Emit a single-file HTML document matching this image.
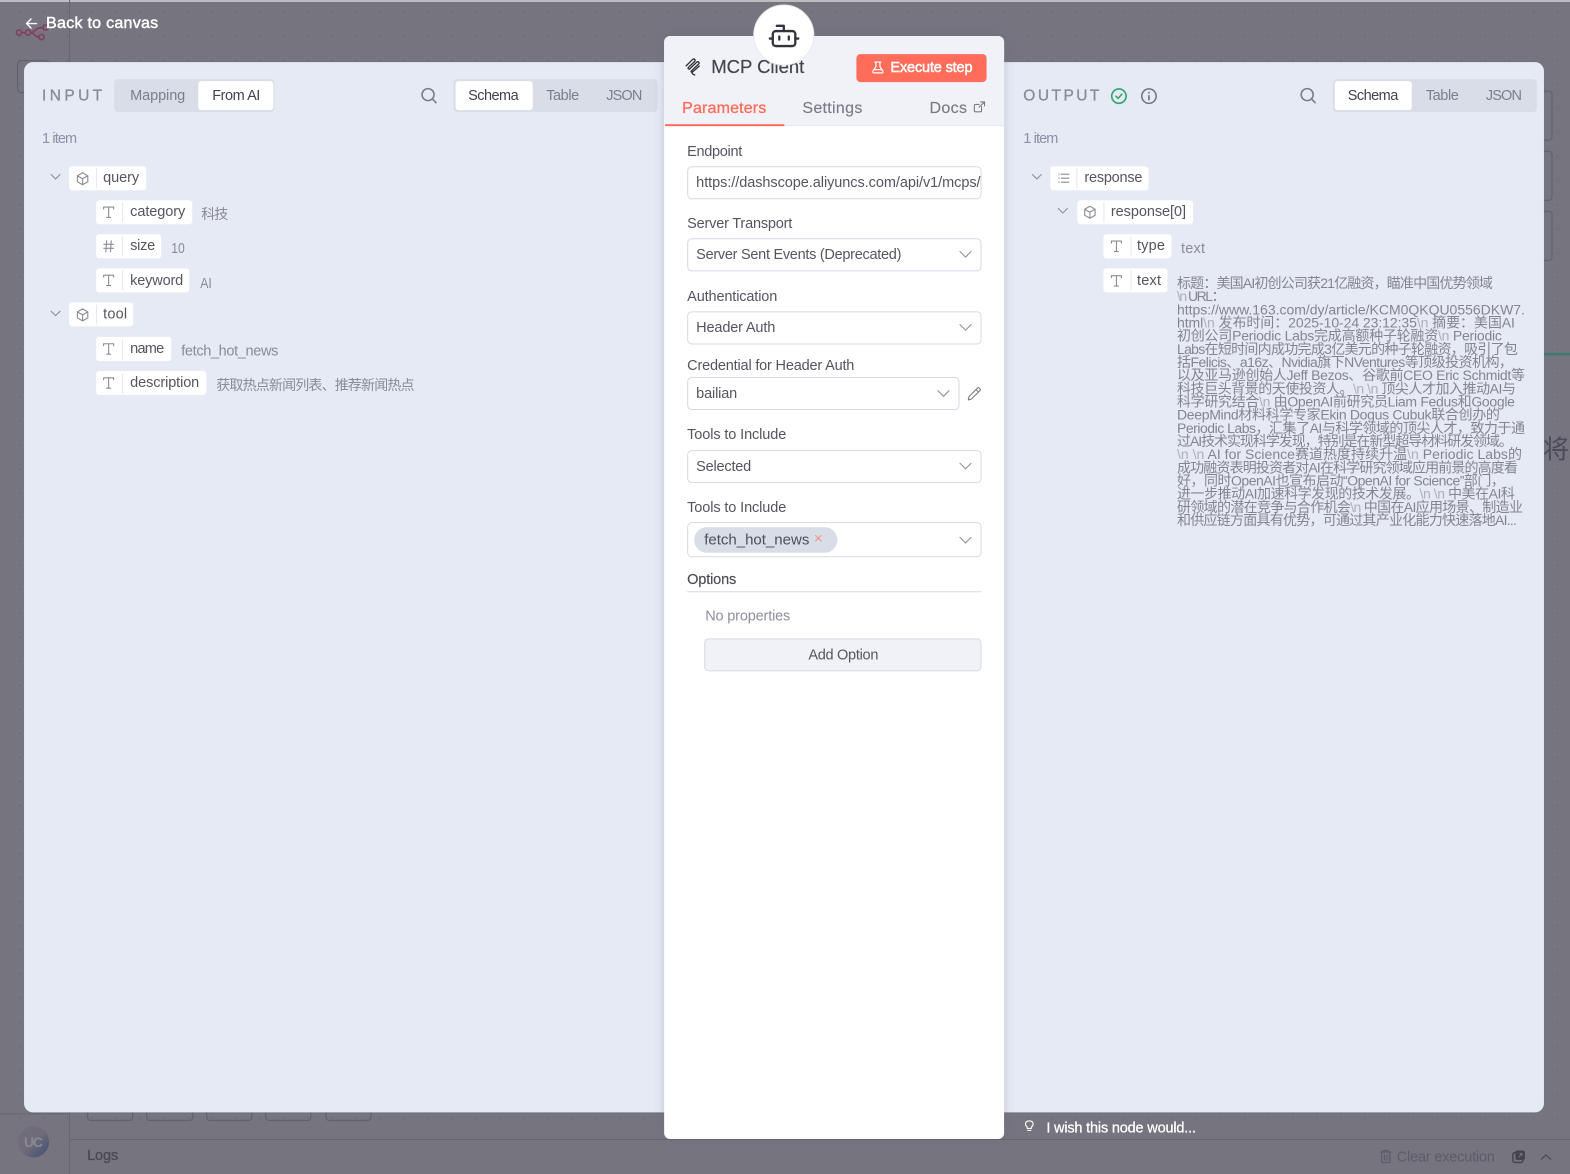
<!DOCTYPE html>
<html lang="en"><head><meta charset="utf-8"><title>MCP Client</title>
<style>
html,body{margin:0;padding:0;background:#76747f;overflow:hidden}
svg{display:block}
text{font-family:"Liberation Sans","Noto Sans CJK SC",sans-serif;font-size:14.5px;fill:currentColor;white-space:pre}
.m{stroke:currentColor;stroke-width:.3px}
.lab{color:#555560}
.val{color:#555560}
.dk{color:#42424e}
.g{color:#7d7e8b}
.v{color:#8a8b97;font-size:14.5px}
.b{color:#84858f;font-size:14px}
.b tspan{fill:#aeb0bd}
.ic{fill:none;stroke:#8b8c98;stroke-width:1.1;stroke-linecap:round;stroke-linejoin:round}
.ch{fill:none;stroke:#8f919e;stroke-width:1.1;stroke-linecap:round;stroke-linejoin:round}
.se{fill:none;stroke:#7d7e8b;stroke-width:1.6;stroke-linecap:round}
.box{fill:#fff;stroke:#d6dae6;stroke-width:1}
.pill{fill:#fff}
.div{stroke:#e4e7f0;stroke-width:1}
.bg{fill:none;stroke:#5f5d68;stroke-width:1}
</style></head><body>
<svg xmlns="http://www.w3.org/2000/svg" width="1570" height="1174" viewBox="0 0 1568 1172.5">
<defs>
<pattern id="dots" x="91" y="12" width="24" height="24" patternUnits="userSpaceOnUse"><circle cx="0.5" cy="0.5" r="0.7" fill="#605e69"/></pattern>
<filter id="sh" x="-10%" y="-5%" width="120%" height="110%"><feDropShadow dx="0" dy="0" stdDeviation="5" flood-color="#5a6080" flood-opacity=".28"/></filter>
<g id="chev"><path class="ch" d="M-4.5 -2.2 L0 2.2 L4.5 -2.2"/></g>
<g id="chevs"><path class="ch" d="M-5.5 -2.8 L0 2.8 L5.5 -2.8"/></g>
<g id="cube"><path class="ic" d="M0 -6 L5.2 -3 V3 L0 6 L-5.2 3 V-3 Z M-5.2 -3 L0 0 L5.2 -3 M0 0 V6"/></g>
<g id="tt"><path class="ic" d="M-5 -3.2 V-5.2 H5 V-3.2 M0 -5.2 V5.2 M-2 5.2 H2"/></g>
<g id="hash"><path class="ic" d="M-2 -5.5 L-2.8 5.5 M2.6 -5.5 L1.8 5.5 M-4.8 -2 H4.8 M-4.8 2 H4.8"/></g>
<g id="list"><path class="ic" d="M-2.5 -4 H5 M-2.5 0 H5 M-2.5 4 H5 M-5 -4 H-4.7 M-5 0 H-4.7 M-5 4 H-4.7"/></g>
<g id="search"><circle class="se" cx="-1.500" cy="-1.500" r="6"/><path class="se" d="M3 3 L6.500 6.500"/></g>
<linearGradient id="av" x1="0" y1="0" x2="1" y2="1"><stop offset="0" stop-color="#6f6f7c"/><stop offset=".5" stop-color="#716a78"/><stop offset=".8" stop-color="#4e5a78"/><stop offset="1" stop-color="#5a5f7c"/></linearGradient>
</defs>

<!-- canvas background -->
<rect width="1570" height="1174" fill="#76747f"/>
<rect width="1570" height="1138" fill="url(#dots)"/>
<rect width="1570" height="2" fill="#bdbdc0"/>
<path d="M69.5 0 V1174 M69 1138 H1570 M0 1112.500 H69" stroke="#67656f" fill="none"/>
<rect x="17.5" y="60.5" width="32" height="32" rx="4" class="bg"/>
<g fill="none" stroke="#80405e" stroke-width="1.6">
<circle cx="19" cy="32.5" r="2.6"/><circle cx="28" cy="32.5" r="2.6"/><circle cx="41.5" cy="37" r="2.6"/><circle cx="45.5" cy="27.5" r="2.6"/>
<path d="M21.6 32.5 H25.4 M30.6 32.5 C35 32.5 34 37 38.9 37 M30.6 32.5 C35 32.5 35 27.5 42.9 27.5"/></g>
<g class="bg"><rect x="1528" y="91" width="22" height="49" rx="3"/><rect x="1528" y="151" width="22" height="49" rx="3"/><rect x="1528" y="211" width="22" height="49" rx="3"/>
<rect x="87.5" y="1090" width="45" height="29" rx="3"/><rect x="146.5" y="1090" width="46" height="29" rx="3"/><rect x="206.5" y="1090" width="45" height="29" rx="3"/><rect x="265.5" y="1090" width="45" height="29" rx="3"/><rect x="325.5" y="1090" width="45" height="29" rx="3"/></g>
<rect x="1540" y="352.5" width="30" height="2.5" fill="#3f7a6f"/>
<text x="1541" y="458" style="font-size:26px;color:#4c4b56">将[</text>

<!-- avatar -->
<circle cx="33.5" cy="1140.500" r="15.5" fill="url(#av)"/>
<text x="24" y="1145.500" textLength="19" lengthAdjust="spacing" style="font-size:14px;font-weight:700;color:#8a8893">UC</text>
<text x="87" y="1158.500" textLength="31" lengthAdjust="spacing" class="m" style="font-size:14.5px;color:#4a4853">Logs</text>
<g fill="none" stroke="#5d5b66" stroke-width="1.2" stroke-linecap="round"><path d="M1379 1150.5 H1389 M1382 1150.5 V1149 H1386 V1150.5 M1380 1151 V1161 H1388 V1151 M1382.8 1153.5 V1158.5 M1385.2 1153.5 V1158.5"/></g>
<text x="1395" y="1160" textLength="98" lengthAdjust="spacing" style="font-size:14.5px;color:#5d5b66">Clear execution</text>
<rect x="1511" y="1151" width="10" height="10" rx="2" fill="none" stroke="#45434d" stroke-width="1.5"/><rect x="1513.5" y="1149" width="9.5" height="9.5" rx="2" fill="#45434d"/><path d="M1516.5 1156 L1520 1152 M1517.5 1152 H1520 V1154.5" stroke="#76747f" fill="none"/>
<path d="M1539 1158 L1544 1153.5 L1549 1158" fill="none" stroke="#4e4c57" stroke-width="1.3"/>

<!-- back link -->
<path d="M36.5 23.5 H26.5 M31 19 L26.5 23.5 L31 28" fill="none" stroke="#fff" stroke-width="1.4" stroke-linecap="round" stroke-linejoin="round"/>
<text x="46" y="28" textLength="112" lengthAdjust="spacing" class="m" style="font-size:16px;color:#fff;stroke-width:.45px">Back to canvas</text>

<!-- main panel -->
<rect x="24" y="62" width="1518" height="1049" rx="9" fill="#e6eaf4"/>

<!-- INPUT -->
<text x="42" y="100.5" textLength="60" lengthAdjust="spacing" class="m" style="font-size:15.5px;color:#8a8b97">INPUT</text>
<rect x="114" y="79" width="160" height="33" rx="4" fill="#d9dde8"/>
<rect x="198" y="81" width="75" height="29" rx="3" fill="#fff"/>
<text x="130" y="100" textLength="55" lengthAdjust="spacing" class="g">Mapping</text>
<text x="212" y="100" textLength="48" lengthAdjust="spacing" class="dk">From AI</text>
<use href="#search" x="429" y="96"/>
<rect x="453" y="79" width="204" height="33" rx="4" fill="#d9dde8"/>
<rect x="455" y="81" width="77" height="29" rx="3" fill="#fff"/>
<text x="467.500" y="100" textLength="50.5" lengthAdjust="spacing" class="dk">Schema</text>
<text x="545.500" y="100" textLength="33" lengthAdjust="spacing" class="g">Table</text>
<text x="605.500" y="100" textLength="36" lengthAdjust="spacing" class="g">JSON</text>
<text x="42" y="143" textLength="35" lengthAdjust="spacing" style="color:#8a90a8;font-size:14.5px">1 item</text>

<use href="#chev" x="55.5" y="176.5"/>
<rect class="pill" x="69" y="166" width="77" height="24" rx="3"/><path class="div" d="M96.5 168 V188"/>
<use href="#cube" x="82.5" y="178.5"/>
<text x="103" y="182" textLength="36" lengthAdjust="spacing" class="val">query</text>

<rect class="pill" x="96" y="200" width="96" height="24" rx="3"/><path class="div" d="M122.5 202 V222"/>
<use href="#tt" x="108.5" y="212"/>
<text x="130" y="215.700" textLength="55" lengthAdjust="spacing" class="val">category</text>
<text x="201" y="218.7" textLength="27" lengthAdjust="spacing" class="v" style="font-size:14px">科技</text>

<rect class="pill" x="96" y="234" width="65" height="24" rx="3"/><path class="div" d="M122.5 236 V256"/>
<use href="#hash" x="108.5" y="246"/>
<text x="130" y="249.700" textLength="25" lengthAdjust="spacing" class="val">size</text>
<text x="171" y="252.7" textLength="13.5" lengthAdjust="spacingAndGlyphs" class="v">10</text>

<rect class="pill" x="96" y="268" width="93" height="24" rx="3"/><path class="div" d="M122.5 270 V290"/>
<use href="#tt" x="108.5" y="280"/>
<text x="130" y="284.700" textLength="53" lengthAdjust="spacing" class="val">keyword</text>
<text x="200" y="287.7" textLength="11.5" lengthAdjust="spacingAndGlyphs" class="v">AI</text>

<use href="#chev" x="55.5" y="313"/>
<rect class="pill" x="69" y="302" width="64" height="24" rx="3"/><path class="div" d="M96.5 304 V324"/>
<use href="#cube" x="82.5" y="314.5"/>
<text x="103" y="318" textLength="24" lengthAdjust="spacing" class="val">tool</text>

<rect class="pill" x="96" y="336.500" width="75" height="24" rx="3"/><path class="div" d="M122.5 339 V359"/>
<use href="#tt" x="108.5" y="348.500"/>
<text x="130" y="352.500" textLength="34" lengthAdjust="spacing" class="val">name</text>
<text x="181" y="355" textLength="97" lengthAdjust="spacing" class="v">fetch_hot_news</text>

<rect class="pill" x="96" y="370.500" width="110" height="24" rx="3"/><path class="div" d="M122.5 373 V393"/>
<use href="#tt" x="108.5" y="382.500"/>
<text x="130" y="386.500" textLength="69" lengthAdjust="spacing" class="val">description</text>
<text x="216" y="389.500" textLength="198" lengthAdjust="spacing" class="v" style="font-size:14px">获取热点新闻列表、推荐新闻热点</text>

<!-- OUTPUT -->
<text x="1022" y="100.5" textLength="76" lengthAdjust="spacing" class="m" style="font-size:15.5px;color:#8a8b97">OUTPUT</text>
<circle cx="1117.5" cy="96" r="7.2" fill="none" stroke="#2aa568" stroke-width="1.6"/><path d="M1114.5 96 L1116.7 98.2 L1120.5 94" fill="none" stroke="#2aa568" stroke-width="1.5" stroke-linecap="round" stroke-linejoin="round"/>
<circle cx="1147.5" cy="96" r="7.2" fill="none" stroke="#70717d" stroke-width="1.5"/><path d="M1147.5 95.5 V99.5 M1147.5 92.3 V92.8" fill="none" stroke="#70717d" stroke-width="1.6" stroke-linecap="round"/>
<use href="#search" x="1307" y="96"/>
<rect x="1331" y="79" width="204" height="33" rx="4" fill="#d9dde8"/>
<rect x="1333" y="81" width="77" height="29" rx="3" fill="#fff"/>
<text x="1346" y="100" textLength="50.5" lengthAdjust="spacing" class="dk">Schema</text>
<text x="1424" y="100" textLength="33" lengthAdjust="spacing" class="g">Table</text>
<text x="1484" y="100" textLength="36" lengthAdjust="spacing" class="g">JSON</text>
<text x="1022" y="143" textLength="35" lengthAdjust="spacing" style="color:#8a90a8;font-size:14.5px">1 item</text>

<use href="#chev" x="1035.5" y="176.5"/>
<rect class="pill" x="1049" y="166" width="98" height="24" rx="3"/><path class="div" d="M1075.500 168 V188"/>
<use href="#list" x="1062.500" y="178"/>
<text x="1083" y="182" textLength="58" lengthAdjust="spacing" class="val">response</text>

<use href="#chev" x="1061.500" y="210.5"/>
<rect class="pill" x="1076" y="200" width="115.500" height="24" rx="3"/><path class="div" d="M1102.500 202 V222"/>
<use href="#cube" x="1088.500" y="212"/>
<text x="1109.500" y="215.700" textLength="75" lengthAdjust="spacing" class="val">response[0]</text>

<rect class="pill" x="1102" y="234" width="68" height="24" rx="3"/><path class="div" d="M1129.500 236 V256"/>
<use href="#tt" x="1115" y="246"/>
<text x="1135.500" y="249.700" textLength="28" lengthAdjust="spacing" class="val">type</text>
<text x="1179.500" y="252.700" textLength="24" lengthAdjust="spacing" class="v">text</text>

<rect class="pill" x="1102" y="268" width="64" height="24" rx="3"/><path class="div" d="M1129.500 270 V290"/>
<use href="#tt" x="1115" y="280.500"/>
<text x="1135.500" y="284.700" textLength="24" lengthAdjust="spacing" class="val">text</text>

<g class="b">
<text class="b" x="1175.500" y="287.7" textLength="315.5" lengthAdjust="spacing">标题：美国AI初创公司获21亿融资，瞄准中国优势领域</text>
<text class="b" x="1175.500" y="300.85" textLength="48.5" lengthAdjust="spacing"><tspan>\n</tspan> URL：</text>
<text class="b" x="1175.500" y="314" textLength="347.5" lengthAdjust="spacing">https://www.163.com/dy/article/KCM0QKQU0556DKW7.</text>
<text class="b" x="1175.500" y="327.15" textLength="337.5" lengthAdjust="spacing">html<tspan>\n</tspan> 发布时间：2025-10-24 23:12:35<tspan>\n</tspan> 摘要：美国AI</text>
<text class="b" x="1175.500" y="340.3" textLength="324.5" lengthAdjust="spacing">初创公司Periodic Labs完成高额种子轮融资<tspan>\n</tspan> Periodic</text>
<text class="b" x="1175.500" y="353.45" textLength="340.5" lengthAdjust="spacing">Labs在短时间内成功完成3亿美元的种子轮融资，吸引了包</text>
<text class="b" x="1175.500" y="366.6" textLength="335.5" lengthAdjust="spacing">括Felicis、a16z、Nvidia旗下NVentures等顶级投资机构，</text>
<text class="b" x="1175.500" y="379.75" textLength="347.5" lengthAdjust="spacing">以及亚马逊创始人Jeff Bezos、谷歌前CEO Eric Schmidt等</text>
<text class="b" x="1175.500" y="392.9" textLength="338.5" lengthAdjust="spacing">科技巨头背景的天使投资人。<tspan>\n \n</tspan> 顶尖人才加入推动AI与</text>
<text class="b" x="1175.500" y="406.05" textLength="337.5" lengthAdjust="spacing">科学研究结合<tspan>\n</tspan> 由OpenAI前研究员Liam Fedus和Google</text>
<text class="b" x="1175.500" y="419.2" textLength="322.5" lengthAdjust="spacing">DeepMind材料科学专家Ekin Dogus Cubuk联合创办的</text>
<text class="b" x="1175.500" y="432.35" textLength="347.5" lengthAdjust="spacing">Periodic Labs，汇集了AI与科学领域的顶尖人才，致力于通</text>
<text class="b" x="1175.500" y="445.5" textLength="335.5" lengthAdjust="spacing">过AI技术实现科学发现，特别是在新型超导材料研发领域。</text>
<text class="b" x="1175.500" y="458.65" textLength="344.5" lengthAdjust="spacing"><tspan>\n \n</tspan> AI for Science赛道热度持续升温<tspan>\n</tspan> Periodic Labs的</text>
<text class="b" x="1175.500" y="471.8" textLength="340.5" lengthAdjust="spacing">成功融资表明投资者对AI在科学研究领域应用前景的高度看</text>
<text class="b" x="1175.500" y="484.95" textLength="327.5" lengthAdjust="spacing">好，同时OpenAI也宣布启动“OpenAI for Science”部门，</text>
<text class="b" x="1175.500" y="498.1" textLength="337.5" lengthAdjust="spacing">进一步推动AI加速科学发现的技术发展。<tspan>\n \n</tspan> 中美在AI科</text>
<text class="b" x="1175.500" y="511.25" textLength="345.5" lengthAdjust="spacing">研领域的潜在竞争与合作机会<tspan>\n</tspan> 中国在AI应用场景、制造业</text>
<text class="b" x="1175.500" y="524.4" textLength="339.5" lengthAdjust="spacing">和供应链方面具有优势，可通过其产业化能力快速落地AI...</text>
</g>

<!-- wish -->
<path d="M1025.5 1125 C1023.5 1123.5 1023.5 1119.5 1028 1119.5 C1032.5 1119.5 1032.5 1123.5 1030.5 1125 L1030 1127 H1026 Z M1026.5 1129 H1029.5" fill="none" stroke="#fff" stroke-width="1.1" stroke-linecap="round" stroke-linejoin="round"/>
<text x="1045" y="1131" textLength="149.500" lengthAdjust="spacing" class="m" style="font-size:14.5px;color:#fff;stroke-width:.25px">I wish this node would...</text>

<!-- center panel -->
<g transform="translate(-0.7,0)">
<g filter="url(#sh)"><rect x="664" y="36" width="339.5" height="1101.500" rx="6" fill="#fff"/></g>
<path d="M664 125 V42 A6 6 0 0 1 670 36 H997.5 A6 6 0 0 1 1003.5 42 V125 Z" fill="#f0f2f8"/>
<path d="M664 125.5 H1003.5" stroke="#e3e6ef"/>

<path d="M686 65.8 L692.3 59.5 Q693.6 58.4 694.6 59.4 Q695.4 60.4 694.4 61.4 L688 67.6 Q687.6 69 689.2 69 L696.6 62 Q697.8 61.2 698.6 62 Q699.3 63 698.4 64 L691 71 Q690.6 72.2 692.2 72 L699 66 M691.6 71.6 Q692 74.5 694.6 74.8" fill="none" stroke="#33333d" stroke-width="1.35" stroke-linecap="round" stroke-linejoin="round"/>
<text x="711" y="73" textLength="93" lengthAdjust="spacing" class="m" style="font-size:18.5px;color:#44444f;stroke-width:.2px">MCP Client</text>
<rect x="856" y="54" width="130" height="28" rx="4" fill="#ff6d5a"/>
<path d="M874.5 62 H880.5 M875.5 62 V66.5 L872.5 71 C872 72.2 872.6 72.8 873.5 72.8 H881.5 C882.4 72.8 883 72.2 882.5 71 L879.5 66.5 V62 M873.8 69.5 H881.2" fill="none" stroke="#fff" stroke-width="1.2" stroke-linecap="round" stroke-linejoin="round"/>
<text x="890" y="72" textLength="82" lengthAdjust="spacing" class="m" style="font-size:14.5px;color:#fff;stroke-width:.5px">Execute step</text>

<circle cx="783.500" cy="35" r="30" fill="#fff" stroke="#e6e9f2"/>
<g transform="translate(-1,0)" fill="none" stroke="#33333d" stroke-width="2.3" stroke-linecap="round" stroke-linejoin="round">
<rect x="773.5" y="31" width="22.5" height="15" rx="3"/>
<path d="M784.5 31 V25.8 H777.5 M770.5 38.5 H773.5 M796 38.5 H799 M780 36.5 V39.5 M789.5 36.5 V39.5"/>
</g>

<text x="682" y="113" textLength="84" lengthAdjust="spacing" class="m" style="font-size:16px;color:#ff6d5a">Parameters</text>
<rect x="665" y="124" width="119" height="2" fill="#ff6d5a"/>
<text x="802" y="113" textLength="60" lengthAdjust="spacing" class="m" style="font-size:16px;color:#7a7b86;stroke-width:.15px">Settings</text>
<text x="929" y="113" textLength="37.5" lengthAdjust="spacing" class="m" style="font-size:16px;color:#7a7b86;stroke-width:.15px">Docs</text>
<path d="M981 106.5 V110.5 C981 111.2 980.5 111.7 979.8 111.7 H975 C974.3 111.7 973.8 111.2 973.8 110.5 V105.5 C973.8 104.8 974.3 104.3 975 104.3 H978.5 M980 101.8 H984 V105.8 M984 101.8 L978.5 107" fill="none" stroke="#7a7b86" stroke-width="1.1" stroke-linecap="round" stroke-linejoin="round"/>

<text x="687" y="155.700" textLength="55" lengthAdjust="spacing" class="lab">Endpoint</text>
<rect class="box" x="687.5" y="166.5" width="293" height="32" rx="4"/>
<text x="696" y="187" textLength="284" lengthAdjust="spacing" class="val">https://dashscope.aliyuncs.com/api/v1/mcps/</text>

<text x="687" y="227.600" textLength="105" lengthAdjust="spacing" class="lab">Server Transport</text>
<rect class="box" x="687.5" y="238.5" width="293" height="32" rx="4"/>
<text x="696" y="258.700" textLength="205" lengthAdjust="spacing" class="val">Server Sent Events (Deprecated)</text>
<use href="#chevs" x="965" y="254"/>

<text x="687" y="300.600" textLength="90" lengthAdjust="spacing" class="lab">Authentication</text>
<rect class="box" x="687.5" y="311.5" width="293" height="32" rx="4"/>
<text x="696" y="331.700" textLength="79" lengthAdjust="spacing" class="val">Header Auth</text>
<use href="#chevs" x="965" y="327"/>

<text x="687" y="369.500" textLength="167" lengthAdjust="spacing" class="lab">Credential for Header Auth</text>
<rect class="box" x="687.5" y="377" width="271" height="32" rx="4"/>
<text x="696" y="397.500" textLength="41" lengthAdjust="spacing" class="val">bailian</text>
<use href="#chevs" x="943" y="393"/>
<path d="M968.5 396 L977 387.5 C978 386.5 980.5 388.5 979.5 390 L971 398.5 L967.8 399.5 Z M975.5 389 L978 391.5" fill="none" stroke="#7a7b86" stroke-width="1.1" stroke-linejoin="round"/>

<text x="687" y="438.500" textLength="99" lengthAdjust="spacing" class="lab">Tools to Include</text>
<rect class="box" x="687.5" y="450" width="293" height="32" rx="4"/>
<text x="696" y="470.500" textLength="55" lengthAdjust="spacing" class="val">Selected</text>
<use href="#chevs" x="965" y="465.500"/>

<text x="687" y="511.500" textLength="99" lengthAdjust="spacing" class="lab">Tools to Include</text>
<rect class="box" x="687.5" y="522" width="293" height="34" rx="4"/>
<rect x="694" y="526.500" width="143" height="25.5" rx="12.7" fill="#d9dde8"/>
<text x="704" y="544" textLength="105" lengthAdjust="spacing" style="font-size:15px;color:#4e4e5a">fetch_hot_news</text>
<path d="M815 534.500 L821 540.500 M821 534.500 L815 540.500" stroke="#f58a7b" stroke-width="1" fill="none"/>
<use href="#chevs" x="965" y="539.500"/>

<text x="687" y="583.500" textLength="49" lengthAdjust="spacing" class="m" style="color:#4a4a56;stroke-width:.15px">Options</text>
<path d="M687 591 H981" stroke="#d6dae6"/>
<text x="705" y="619.500" textLength="85" lengthAdjust="spacing" style="color:#8d8f9c">No properties</text>
<rect x="704.5" y="638" width="276" height="32" rx="4" fill="#f0f2f8" stroke="#d6dae6"/>
<text x="808" y="658.500" textLength="70" lengthAdjust="spacing" class="val">Add Option</text>
</g>
</svg>
</body></html>
